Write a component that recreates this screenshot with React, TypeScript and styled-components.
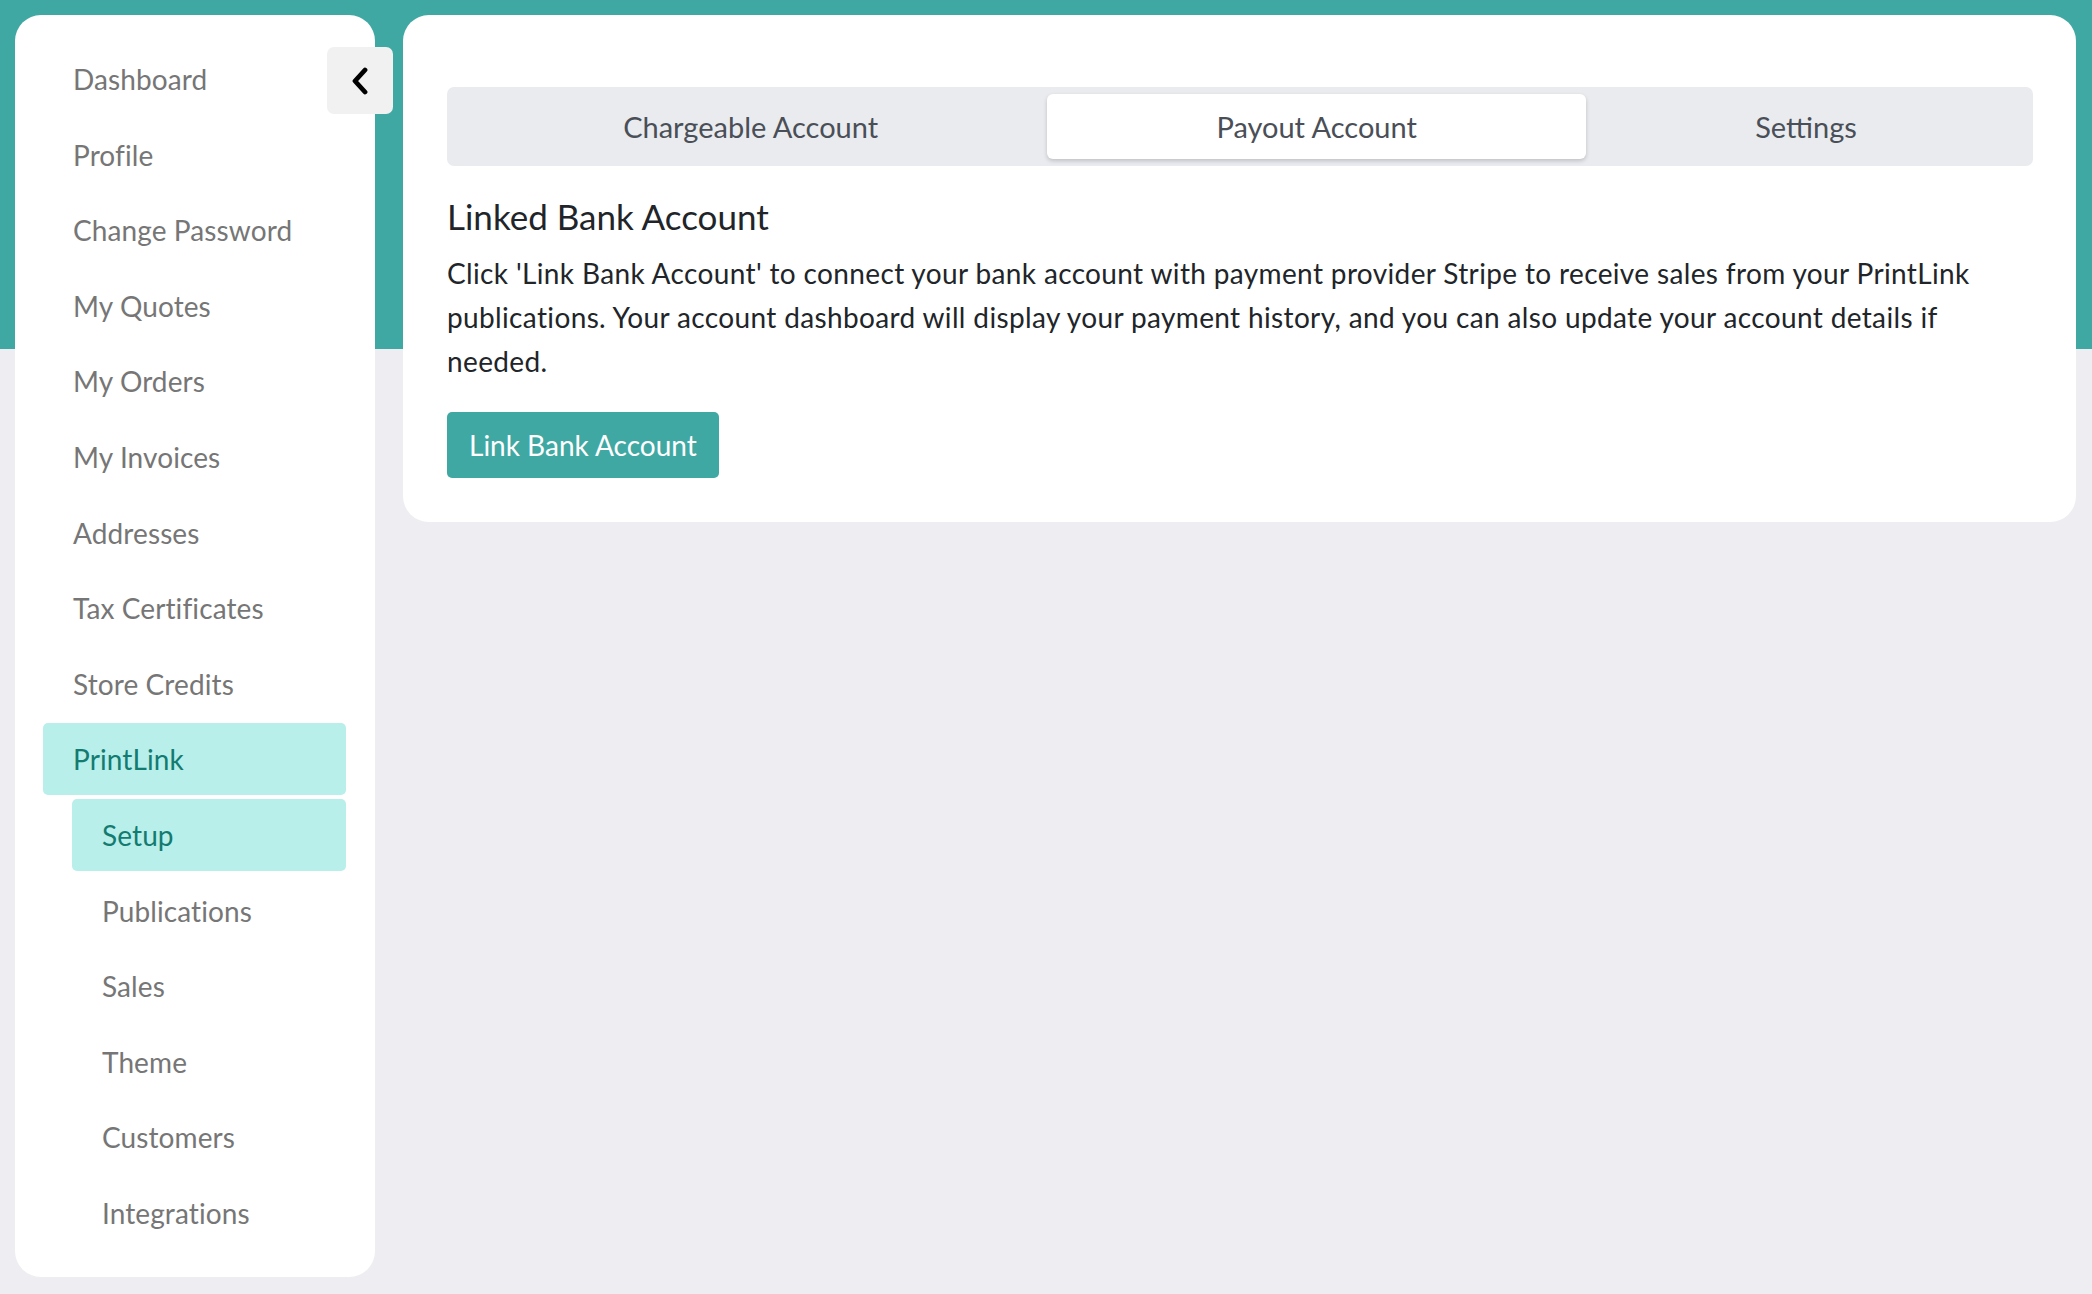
import styled, { createGlobalStyle } from "styled-components";

const TEAL = "#40a8a3";

const GlobalStyle = createGlobalStyle`
  html, body {
    margin: 0;
    padding: 0;
  }
  body {
    font-family: Lato, "Noto Sans", Arial, sans-serif;
    background: #eeedf2;
  }
  * {
    box-sizing: border-box;
  }
`;

type NavItem = {
  label: string;
  active?: boolean;
  children?: { label: string; active?: boolean }[];
};

const NAV_ITEMS: NavItem[] = [
  { label: "Dashboard" },
  { label: "Profile" },
  { label: "Change Password" },
  { label: "My Quotes" },
  { label: "My Orders" },
  { label: "My Invoices" },
  { label: "Addresses" },
  { label: "Tax Certificates" },
  { label: "Store Credits" },
  {
    label: "PrintLink",
    active: true,
    children: [
      { label: "Setup", active: true },
      { label: "Publications" },
      { label: "Sales" },
      { label: "Theme" },
      { label: "Customers" },
      { label: "Integrations" },
    ],
  },
];

const TABS = ["Chargeable Account", "Payout Account", "Settings"];
const ACTIVE_TAB = "Payout Account";

export default function App() {
  return (
    <>
      <GlobalStyle />
      <Page>
        <Sidebar>
          <CollapseButton type="button" aria-label="Collapse menu">
            <svg width="20" height="28" viewBox="0 0 20 28" fill="none">
              <polyline
                points="15,3 5,14 15,25"
                stroke="#000"
                strokeWidth="4.8"
                strokeLinecap="round"
                strokeLinejoin="round"
              />
            </svg>
          </CollapseButton>
          <NavList>
            {NAV_ITEMS.map((item) => (
              <li key={item.label}>
                <NavLink $active={!!item.active}>{item.label}</NavLink>
                {item.children && (
                  <SubList>
                    {item.children.map((child) => (
                      <li key={child.label}>
                        <NavLink $active={!!child.active}>{child.label}</NavLink>
                      </li>
                    ))}
                  </SubList>
                )}
              </li>
            ))}
          </NavList>
        </Sidebar>

        <MainCard>
          <TabBar>
            {TABS.map((tab) => (
              <Tab key={tab} type="button" $active={tab === ACTIVE_TAB}>
                {tab}
              </Tab>
            ))}
          </TabBar>
          <Heading>Linked Bank Account</Heading>
          <Description>
            Click 'Link Bank Account' to connect your bank account with payment
            provider Stripe to receive sales from your PrintLink publications.
            Your account dashboard will display your payment history, and you
            can also update your account details if needed.
          </Description>
          <PrimaryButton type="button">Link Bank Account</PrimaryButton>
        </MainCard>
      </Page>
    </>
  );
}

const Page = styled.div`
  display: flex;
  align-items: flex-start;
  gap: 28px;
  min-height: 100vh;
  padding: 15px 16px 17px 15px;
  background: linear-gradient(${TEAL} 0 349px, #eeedf2 349px);
`;

const Sidebar = styled.aside`
  position: relative;
  flex: 0 0 360px;
  padding: 28px 29px 28px 28px;
  border-radius: 26px;
  background: #fff;
`;

const CollapseButton = styled.button`
  position: absolute;
  top: 32px;
  right: -18px;
  display: grid;
  place-items: center;
  width: 66px;
  height: 67px;
  border: 0;
  border-radius: 7px;
  padding: 0;
  background: #f1f1f1;
  cursor: pointer;
`;

const NavList = styled.ul`
  display: flex;
  flex-direction: column;
  gap: 3.6px;
  margin: 0;
  padding: 0;
  list-style: none;
`;

const SubList = styled.ul`
  display: flex;
  flex-direction: column;
  gap: 3.6px;
  margin: 3.6px 0 0 29px;
  padding: 0;
  list-style: none;
`;

const NavLink = styled.a<{ $active: boolean }>`
  display: flex;
  align-items: center;
  height: 72px;
  padding-left: 30px;
  border-radius: 5px;
  background: ${({ $active }) => ($active ? "#b8efeb" : "transparent")};
  color: ${({ $active }) => ($active ? "#137b70" : "#767676")};
  font-size: 28px;
  letter-spacing: 0.1px;
  cursor: pointer;
`;

const MainCard = styled.main`
  flex: 1;
  padding: 72px 43px 44px 44px;
  border-radius: 26px;
  background: #fff;
`;

const TabBar = styled.div`
  display: flex;
  height: 79px;
  padding: 7px;
  border-radius: 7px;
  background: #e9ebef;
`;

const Tab = styled.button<{ $active: boolean }>`
  flex: 1 1 auto;
  border: 0;
  border-radius: 6px;
  background: ${({ $active }) => ($active ? "#fff" : "transparent")};
  box-shadow: ${({ $active }) =>
    $active ? "0 2px 4px rgba(0, 0, 0, 0.18)" : "none"};
  color: #4a4f57;
  font-family: inherit;
  font-size: 29px;
  cursor: pointer;
`;

const Heading = styled.h2`
  margin: 31px 0 16px;
  color: #212529;
  font-size: 35px;
  font-weight: 400;
  line-height: 38px;
`;

const Description = styled.p`
  margin: 0 0 29px;
  color: #212529;
  font-size: 28px;
  letter-spacing: 0.36px;
  line-height: 44px;
`;

const PrimaryButton = styled.button`
  height: 66px;
  padding: 0 22px;
  border: 0;
  border-radius: 5px;
  background: ${TEAL};
  color: #fff;
  font-family: inherit;
  font-size: 28px;
  cursor: pointer;
`;
